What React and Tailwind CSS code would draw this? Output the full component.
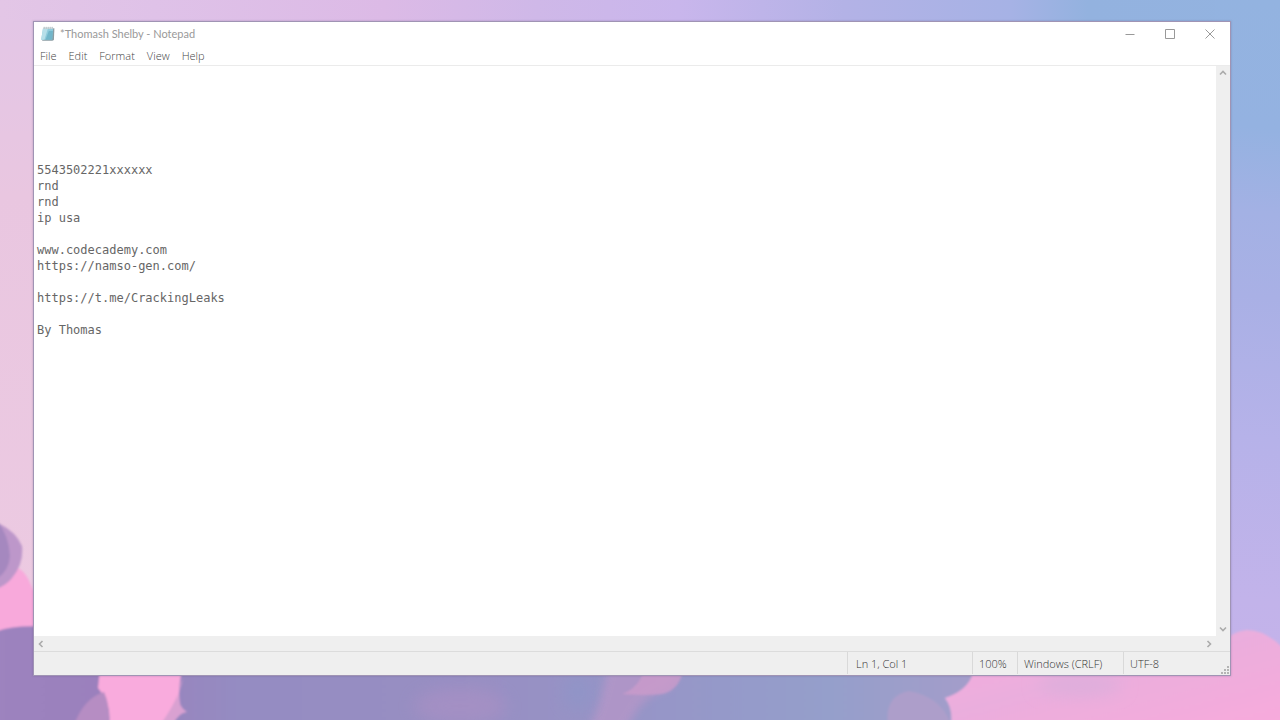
import { useState } from "react";

const initialText = [
  "", "", "", "", "", "",
  "5543502221xxxxxx",
  "rnd",
  "rnd",
  "ip usa",
  "",
  "www.codecademy.com",
  "https://namso-gen.com/",
  "",
  "https://t.me/CrackingLeaks",
  "",
  "By Thomas",
].join("\n");

function Wallpaper() {
  return (
    <svg
      aria-hidden="true"
      viewBox="0 0 1280 720"
      preserveAspectRatio="none"
      className="absolute inset-0 h-full w-full"
    >
      <defs>
        <linearGradient id="sky" x1="0" x2="1" y1="0" y2="0">
          <stop offset="0" stopColor="#e3c6e6" />
          <stop offset="0.12" stopColor="#dfc2e8" />
          <stop offset="0.3" stopColor="#dcbae6" />
          <stop offset="0.42" stopColor="#cfb8e8" />
          <stop offset="0.53" stopColor="#c9b6ec" />
          <stop offset="0.66" stopColor="#b3b2e6" />
          <stop offset="0.79" stopColor="#a6b2e5" />
          <stop offset="0.85" stopColor="#93b2df" />
          <stop offset="1" stopColor="#93b3e0" />
        </linearGradient>
        <linearGradient id="left" x1="0" x2="0" y1="0" y2="1">
          <stop offset="0" stopColor="#e3c6e6" />
          <stop offset="0.25" stopColor="#e9c6e0" />
          <stop offset="1" stopColor="#edcbe2" />
        </linearGradient>
        <linearGradient id="right" gradientUnits="userSpaceOnUse" x1="1260" x2="1190" y1="0" y2="700">
          <stop offset="0" stopColor="#93b3e0" />
          <stop offset="0.18" stopColor="#94b2e1" />
          <stop offset="0.3" stopColor="#a3b1e4" />
          <stop offset="0.42" stopColor="#a9b0e5" />
          <stop offset="0.62" stopColor="#b6b2e9" />
          <stop offset="0.85" stopColor="#c2b3ea" />
          <stop offset="1" stopColor="#c5b2ea" />
        </linearGradient>
        <linearGradient id="violet" x1="0" x2="1" y1="0" y2="0">
          <stop offset="0" stopColor="#9d83bf" />
          <stop offset="0.12" stopColor="#9a80bc" />
          <stop offset="0.25" stopColor="#958cc2" />
          <stop offset="0.5" stopColor="#988fc3" />
          <stop offset="0.68" stopColor="#9696c8" />
          <stop offset="0.85" stopColor="#959fcb" />
          <stop offset="1" stopColor="#a49dca" />
        </linearGradient>
        <linearGradient id="pink" x1="0" x2="1" y1="0" y2="1">
          <stop offset="0" stopColor="#f9addf" />
          <stop offset="0.45" stopColor="#eaaedd" />
          <stop offset="1" stopColor="#f8aadc" />
        </linearGradient>
        <filter id="soft" x="-20%" y="-20%" width="140%" height="140%">
          <feGaussianBlur stdDeviation="1" />
        </filter>
        <filter id="blur" x="-30%" y="-30%" width="160%" height="160%">
          <feGaussianBlur stdDeviation="4" />
        </filter>
        <filter id="haze" x="-50%" y="-50%" width="200%" height="200%">
          <feGaussianBlur stdDeviation="8" />
        </filter>
      </defs>
      <rect width="1280" height="720" fill="url(#sky)" />
      <rect y="20" width="60" height="700" fill="url(#left)" />
      <rect x="1215" y="0" width="65" height="720" fill="url(#right)" />
      <g filter="url(#soft)">
        <path d="M-5 575 L14 567 Q24 568 31 585 L33 590 L60 600 V645 H-5 Z" fill="#f8a9db" />
        <path d="M0 524 Q16 532 22 546 Q24 564 12 578 Q6 586 -5 589 V524 Z" fill="#bd97ca" />
        <path d="M-5 518 Q9 534 10 556 Q9 572 -5 580 Z" fill="#a588bf" />
        <path d="M-5 632 Q14 624 50 627 V660 H975 Q975 674 972 679 Q966 692 945 698 Q954 708 951 725 H-5 Z" fill="url(#violet)" />
        <path d="M101 660 H184 Q176 694 181 708 Q169 712 164 725 H109 Q112 704 98 688 Z" fill="#f9abdd" />
        <path d="M74 725 Q84 698 104 692 Q111 708 108 725 Z" fill="#b68dc3" />
        <path d="M183 678 Q172 703 187 712 Q178 713 173 725 H160 Q179 699 183 678 Z" fill="#d9a1d1" />
        <path d="M972 660 H1222 V655 Q1222 633 1247 630 Q1266 630 1285 650 V725 H951 Q953 708 945 698 Q966 691 972 676 Z" fill="url(#pink)" />
        <path d="M888 725 Q884 696 909 691 Q942 697 951 725 Z" fill="#ad9eca" />
      </g>
      <path d="M608 665 H680 Q676 690 660 692 Q646 698 638 709 L622 735 H585 Q599 711 608 665 Z" fill="#b596c8" opacity=".8" filter="url(#blur)" />
      <path d="M646 665 H684 Q681 690 662 694 Q645 696 622 694 Q640 688 646 665 Z" fill="#cb9bcb" opacity=".8" filter="url(#soft)" />
      <ellipse cx="460" cy="706" rx="46" ry="18" fill="#ac91c5" opacity=".6" filter="url(#haze)" />
      <ellipse cx="1080" cy="685" rx="42" ry="12" fill="#dfaedc" filter="url(#haze)" />
      <ellipse cx="578" cy="692" rx="14" ry="18" fill="#8d96c9" opacity=".6" filter="url(#haze)" />
    </svg>
  );
}

function NotepadIcon() {
  return (
    <svg aria-hidden="true" viewBox="0 0 16 16" className="h-4 w-4 shrink-0">
      <path d="M3.4 2.2 H14.4 L13.9 14 L12.4 14.8 H2.2 Z" fill="#8b9da3" />
      <path d="M3 2.2 H13.2 L12.2 13.8 H1.2 Z" fill="#8fcbdc" />
      <path d="M3 2.2 H8 L4.4 13.8 H1.2 Z" fill="#b7dfe9" />
      <path d="M8.8 5 H12.9 L12.2 13.8 H5.5 Z" fill="#62abc0" opacity=".65" />
      <path d="M3.2 1.5 H13.2 V3.1 H3.1 Z" fill="#d3dfe2" />
      <path d="M4.2 .8 V2.8 M6.2 .8 V2.8 M8.2 .8 V2.8 M10.2 .8 V2.8 M12.2 .8 V2.8" stroke="#9badb1" strokeWidth=".7" />
    </svg>
  );
}

const arrows = {
  up: "M3 7.5 L6 4.5 L9 7.5",
  down: "M3 4.5 L6 7.5 L9 4.5",
  left: "M7.5 3 L4.5 6 L7.5 9",
  right: "M4.5 3 L7.5 6 L4.5 9",
};

function ScrollButton({ direction }) {
  return (
    <button aria-label={"Scroll " + direction} className="flex h-[14px] w-[14px] shrink-0 items-center justify-center">
      <svg viewBox="0 0 12 12" className="h-3 w-3" fill="none" stroke="#ababab" strokeWidth="1.6">
        <path d={arrows[direction]} />
      </svg>
    </button>
  );
}

const captionIcons = [
  { label: "Minimize", d: "M0.5 5.5 H9.5" },
  { label: "Maximize", d: "M0.5 0.5 H9.5 V9.5 H0.5 Z" },
  { label: "Close", d: "M0.5 0.5 L9.5 9.5 M9.5 0.5 L0.5 9.5" },
];

export default function App() {
  const [text, setText] = useState(initialText);
  return (
    <div className="relative flex h-screen overflow-hidden pt-[21px] pr-[49px] pb-11 pl-[33px] font-['Open_Sans',sans-serif]">
      <Wallpaper />
      <main className="relative flex min-w-0 flex-1 flex-col border border-[#a094b4] bg-white text-[11px] leading-4 font-light shadow-[0_0_2px_rgba(70,60,100,0.3)]">
        <header className="flex h-6 shrink-0 items-center">
          <div className="flex flex-1 items-center gap-1 pl-1.5">
            <NotepadIcon />
            <h1 className="font-['Lato',sans-serif] font-normal text-[#999]">*Thomash Shelby - Notepad</h1>
          </div>
          {captionIcons.map((c) => (
            <button key={c.label} aria-label={c.label} className="flex h-full w-10 items-center justify-center">
              <svg viewBox="0 0 10 10" className="h-2.5 w-2.5" fill="none" stroke="#999" strokeWidth="1">
                <path d={c.d} />
              </svg>
            </button>
          ))}
        </header>
        <nav className="flex h-5 shrink-0 items-center gap-3 border-b border-[#ebebeb] px-1.5 text-[#444]">
          {["File", "Edit", "Format", "View", "Help"].map((m) => (
            <button key={m}>{m}</button>
          ))}
        </nav>
        <div className="flex min-h-0 flex-1">
          <textarea
            aria-label="Text editor"
            wrap="off"
            spellCheck={false}
            value={text}
            onChange={(e) => setText(e.target.value)}
            className="min-w-0 flex-1 resize-none overflow-hidden bg-white px-[3px] font-['DejaVu_Sans_Mono',monospace] text-xs leading-4 font-normal text-[#666] outline-none"
          />
          <div className="flex w-[14px] flex-col justify-between bg-[#efefef]">
            <ScrollButton direction="up" />
            <ScrollButton direction="down" />
          </div>
        </div>
        <div className="flex h-[15px] shrink-0 items-center justify-between bg-[#efefef] pr-[14px]">
          <ScrollButton direction="left" />
          <ScrollButton direction="right" />
        </div>
        <footer className="relative flex h-6 shrink-0 border-t border-[#dcdcdc] bg-[#efefef] pb-px leading-6 text-[#333]">
          <div className="flex-1" />
          <div className="w-[125px] border-l border-[#d9d9d9] pl-2">Ln 1, Col 1</div>
          <div className="w-[45px] border-l border-[#d9d9d9] pl-1.5">100%</div>
          <div className="w-[106px] border-l border-[#d9d9d9] pl-1.5">Windows (CRLF)</div>
          <div className="w-[107px] border-l border-[#d9d9d9] pl-1.5">UTF-8</div>
          <svg aria-hidden="true" viewBox="0 0 8 8" className="absolute right-px bottom-px h-2 w-2" fill="#b4b4b4">
            <path d="M6 0h2v2h-2z M6 3h2v2h-2z M3 3h2v2h-2z M6 6h2v2h-2z M3 6h2v2h-2z M0 6h2v2h-2z" />
          </svg>
        </footer>
      </main>
    </div>
  );
}
